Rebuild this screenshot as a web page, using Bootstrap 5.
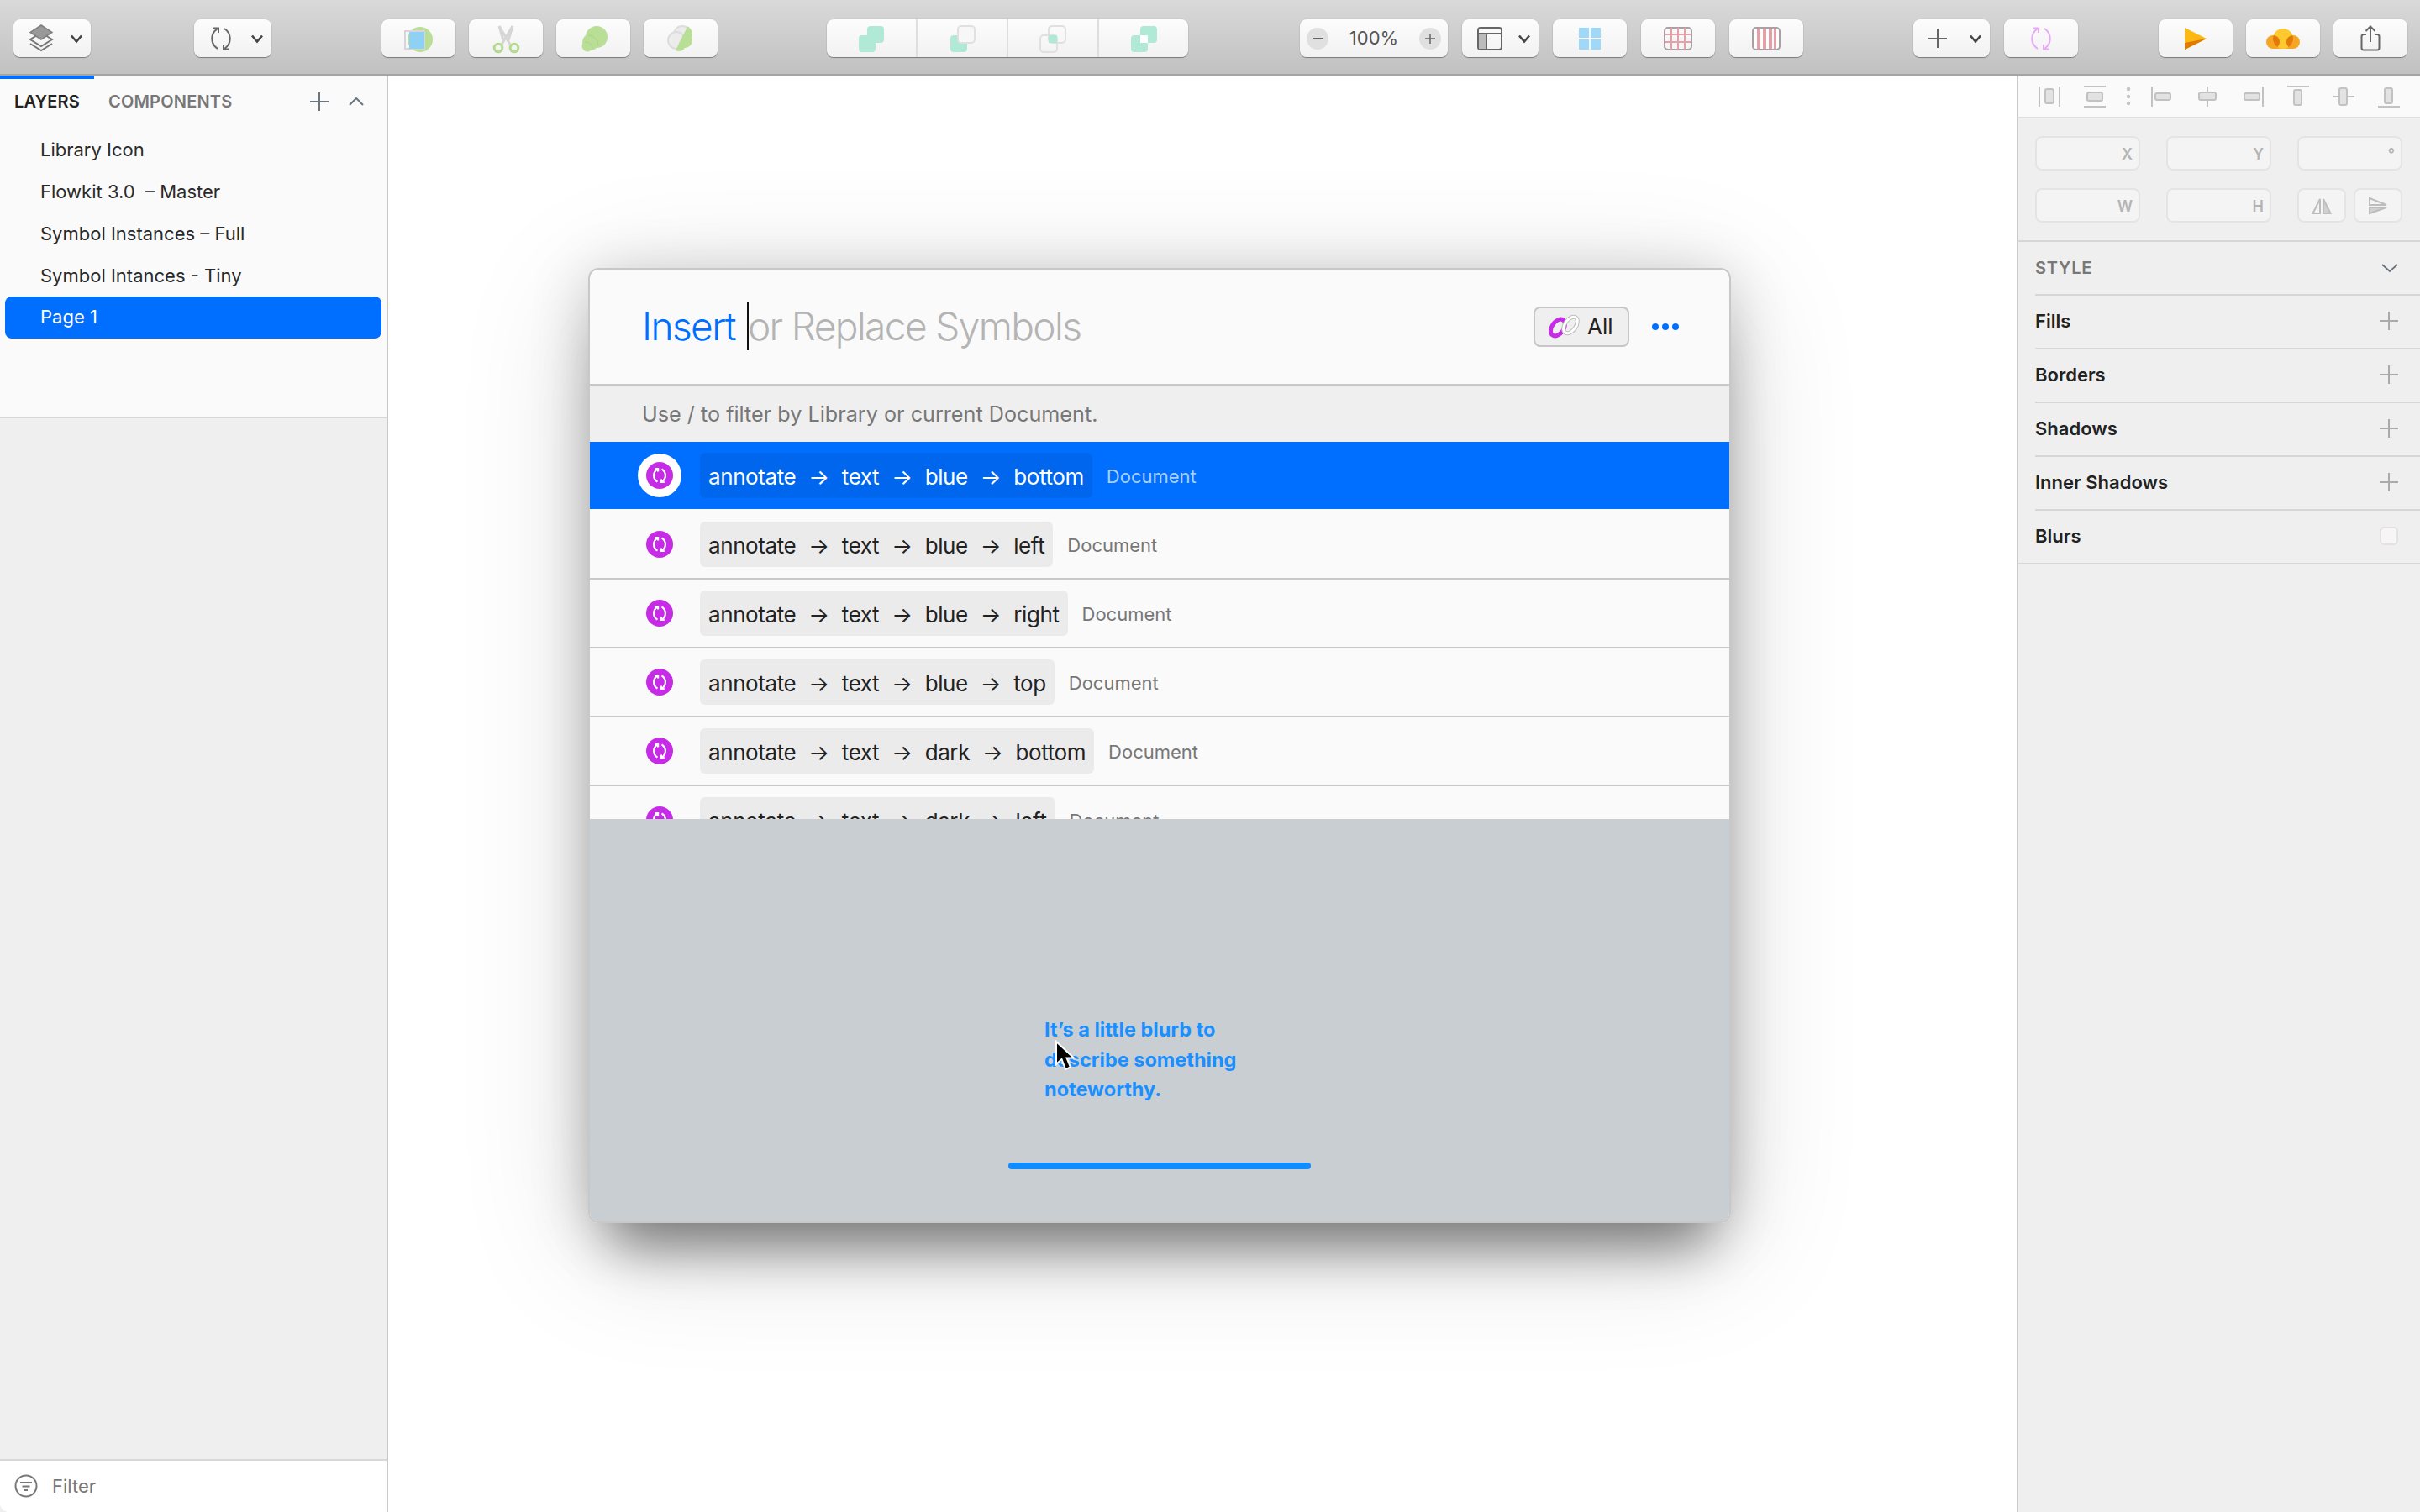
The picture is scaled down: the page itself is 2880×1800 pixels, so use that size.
<!DOCTYPE html>
<html lang="en">
<head>
  <meta charset="UTF-8" />
  <meta name="viewport" content="width=device-width, initial-scale=1.0"/>
  <title>Insert or Replace Symbols</title>
  <link href="https://cdn.jsdelivr.net/npm/bootstrap@5.3.0/dist/css/bootstrap.min.css" rel="stylesheet"/>
  <style>
    html, body {
      height: 1800px;
      overflow: hidden;
    }
    body {
      background: #fff;
      font-family: 'Inter', 'Liberation Sans', sans-serif;
      color: #222;
    }
    /* toolbar */
    .top-bar {
      height: 90px;
      padding: 23px 0 0 16px;
      background: linear-gradient(#d9d9d9, #c1c1c1);
      border-bottom: 2px solid #a4a4a4;
    }
    .tb-btn {
      height: 45px;
      border-radius: 8px;
      background: linear-gradient(#fcfcfc, #f2f2f2);
      box-shadow: 0 1px 1px rgba(0,0,0,.38), 0 0 1px rgba(0,0,0,.2);
      color: #666;
    }
    .tb-split { padding: 0 9px 0 18px; justify-content: space-between; }
    .w-92 { width: 92px; }
    .w-88 { width: 88px; }
    .w-91 { width: 91px; }
    .seg-btn { width: 430px; }
    .seg-btn > div { flex: 1 1 0; height: 100%; border-left: 2px solid #dedede; }
    .seg-btn > div:first-child { border-left: 0; }
    .zoom-btn { width: 176px; padding: 0 8px; font-size: 22px; font-weight: 400; color: #555; }
    .zoom-dot { width: 26px; height: 26px; border-radius: 50%; background: #e0e0e0; }
    .tb-gap-16 { gap: 16px; }
    .tb-gap-17 { gap: 17px; }
    .m-g2 { margin-left: 123px; }
    .m-g3 { margin-left: 131px; }
    .m-g4 { margin-left: 130px; }
    .m-g5 { margin-left: 133px; }
    .m-g6 { margin-left: 131px; }
    .m-g7 { margin-left: 96px; }
    .chev { color: #444; }
    .pink-sync { color: #e7a8f6; }

    .main-wrap { height: 1710px; }

    /* left pane */
    .left-pane {
      width: 462px;
      background: #efefef;
      border-right: 2px solid #c9c9c9;
    }
    .left-top {
      height: 408px;
      background: #fafafa;
      border-bottom: 2px solid #d6d6d6;
    }
    .tab-line { width: 112px; height: 4px; background: #006fff; }
    .tab-head { height: 54px; padding: 0 27px 0 17px; font-size: 20px; font-weight: 600; letter-spacing: .2px; }
    .tab-off { margin-left: 34px; color: #777; }
    .pg-list {
      --bs-list-group-bg: transparent;
      --bs-list-group-active-bg: #006fff;
      --bs-list-group-active-color: #fff;
      --bs-list-group-color: #2a2a2a;
      margin: 6px 6px 0;
    }
    .pg-row {
      height: 50px;
      padding: 0 0 2px 42px;
      border: 0;
      display: flex;
      align-items: center;
      font-size: 22px;
      border-radius: 8px !important;
    }
    .filter-bar {
      height: 63px;
      padding: 0 0 1px 17px;
      background: #fff;
      border-top: 2px solid #d8d8d8;
      border-bottom-left-radius: 10px;
      color: #777;
      font-size: 22px;
      gap: 17px;
    }

    /* canvas and dialog */
    .canvas { padding: 229px 0 0 238px; }
    .sym-dialog {
      width: 1360px;
      height: 1137px;
      border: 2px solid #c8c8c8;
      border-radius: 12px;
      background: #fafafa;
      overflow: hidden;
    }
    .dialog-shadow {
      box-shadow: 0 60px 60px -30px rgba(0,0,0,.38), 0 10px 70px rgba(0,0,0,.20), 0 30px 160px rgba(0,0,0,.14);
      border-radius: 12px;
      width: 1360px;
    }
    .dlg-head {
      height: 138px;
      padding: 0 60px 0 62px;
      border-bottom: 2px solid #c8c8c8;
      font-size: 46px;
      font-weight: 300;
      letter-spacing: -1.6px;
    }
    .ins-word { color: #006fff; }
    .ins-rest { color: #b4b4b4; }
    .caret-bar { width: 2px; height: 57px; background: #111; margin: 0 -1px 0 14px; }
    .all-btn {
      width: 114px;
      height: 48px;
      padding-left: 13px;
      border: 2px solid #c6c6c6;
      border-radius: 8px;
      background: #efefef;
      font-size: 26px;
      font-weight: 400;
      letter-spacing: 0;
      color: #222;
      gap: 7px;
    }
    .more-dots { margin-left: 27px; }
    .dlg-hint {
      height: 67px;
      padding: 4px 0 0 62px;
      background: #efefef;
      font-size: 25.2px;
      font-weight: 400;
      color: #777;
    }
    .sym-clip { height: 450px; overflow: hidden; }
    .sym-list {
      --bs-list-group-bg: #fafafa;
      --bs-list-group-active-bg: #006fff;
      --bs-list-group-active-color: #fff;
      --bs-list-group-border-width: 0;
      --bs-list-group-color: #222;
    }
    .sym-row {
      height: 82px;
      padding: 0 0 0 83px;
      border: 0;
      border-bottom: 2px solid #c8c8c8;
      border-radius: 0 !important;
      display: flex;
      align-items: center;
    }
    .sym-row.active { margin-top: 0; border-bottom: 2px solid #fafafa; }
    .sym-dot {
      width: 32px;
      height: 32px;
      margin-left: -16px;
      border-radius: 50%;
      background: #c62be6;
      color: #fff;
      flex-shrink: 0;
      position: relative;
    }
    .sym-row.active .sym-dot { box-shadow: 0 0 0 10px #fff; }
    .sym-pill {
      height: 54px;
      margin-left: 32px;
      padding: 3px 10px 0;
      border-radius: 6px;
      background: #ebebeb;
      font-size: 26px;
      font-weight: 400;
      letter-spacing: -.4px;
      gap: 15px;
    }
    .sym-row.active .sym-pill { background: #0066ee; }
    .sym-doc { margin: 4px 0 0 17px; font-size: 22px; color: #777; }
    .sym-row.active .sym-doc { color: #abcfff; }
    .dlg-foot { height: 479px; background: #c9ced3; }
    .blurb {
      width: 260px;
      margin-left: 541px;
      padding-top: 233px;
      color: #1a8fff;
      font-size: 23.5px;
      font-weight: 700;
      line-height: 35.5px;
    }
    .foot-bar { width: 360px; height: 8px; margin: 69px auto 0; border-radius: 4px; background: #0f8cff; }
    .cursor-mark { position: absolute; left: 553px; top: 263px; }

    /* right pane */
    .right-pane {
      width: 480px;
      background: #efefef;
      border-left: 2px solid #c9c9c9;
    }
    .align-row {
      height: 51px;
      padding-left: 20px;
      gap: 20px;
      background: #fafafa;
      border-bottom: 2px solid #dedede;
      color: #c2c2c2;
    }
    .geo-box {
      height: 147px;
      padding: 21px 0 0 20px;
      border-bottom: 2px solid #d6d6d6;
      gap: 21px;
    }
    .geo-line { gap: 31px; }
    .geo-input {
      width: 125px;
      height: 41px;
      padding: 2px 7px 0 0;
      border: 2px solid #e4e4e4;
      border-radius: 8px;
      background: #f4f4f4;
      color: #b4b4b4;
      font-size: 18px;
      font-weight: 600;
    }
    .geo-flip { width: 58px; padding: 0; }
    .geo-pair { width: 125px; gap: 9px; }
    .style-row {
      height: 64px;
      margin-left: 20px;
      padding: 0 26px 2px 0;
      border-bottom: 2px solid #d6d6d6;
      font-size: 22px;
      font-weight: 600;
      color: #222;
    }
    .style-head { padding-bottom: 0; font-size: 20px; color: #777; letter-spacing: .8px; }
    .style-end { margin-left: 0; padding-left: 20px; }
    .plus-mark { color: #aaa; }
    .blur-box { width: 22px; height: 22px; border-radius: 5px; border: 2px solid #e4e0e4; background: #f6f6f6; }
  </style>
</head>
<body>

<svg class="d-none" xmlns="http://www.w3.org/2000/svg">
  <symbol id="i-sync" viewBox="0 0 28 28">
    <path d="M10 26C1 20 1 8 10 2M5 1.500H11V7M18 2C27 8 27 20 18 26M23 26.500H17V21" fill="none" stroke="currentColor" stroke-width="2"/>
  </symbol>
  <symbol id="i-sync-sm" viewBox="0 0 28 28">
    <path d="M10 26C1 20 1 8 10 2M5 1.500H11V7M18 2C27 8 27 20 18 26M23 26.500H17V21" fill="none" stroke="currentColor" stroke-width="3.400"/>
  </symbol>
  <symbol id="i-chev" viewBox="0 0 16 12">
    <path d="M2 2.500L8 9.500L14 2.500" fill="none" stroke="currentColor" stroke-width="2.600"/>
  </symbol>
  <symbol id="i-plus" viewBox="0 0 22 22">
    <path d="M11 0V22M0 11H22" fill="none" stroke="currentColor" stroke-width="2"/>
  </symbol>
</svg>

<div class="top-bar d-flex align-items-start">
  <div class="tb-btn tb-split w-92 d-flex align-items-center">
    <svg width="30" height="34" viewBox="0 0 30 34"><path d="M15 10L28 18 15 26 2 18Z" fill="none" stroke="#777" stroke-width="2"/><path d="M2 23L15 31 28 23" fill="none" stroke="#777" stroke-width="2"/><path d="M15 1L28 9.500 15 18 2 9.500Z" fill="#999" stroke="#808080" stroke-width="1.500"/></svg>
    <svg class="chev" width="16" height="12"><use href="#i-chev"/></svg>
  </div>
  <div class="tb-btn tb-split w-92 m-g2 d-flex align-items-center">
    <svg width="28" height="28"><use href="#i-sync"/></svg>
    <svg class="chev" width="16" height="12"><use href="#i-chev"/></svg>
  </div>
  <div class="m-g3 d-flex tb-gap-16">
    <div class="tb-btn w-88 d-flex align-items-center justify-content-center">
      <svg width="40" height="40" viewBox="0 0 40 40"><circle cx="22" cy="21" r="15" fill="#b9de95"/><rect x="4" y="11" width="23" height="21" fill="none" stroke="#d8d4dc" stroke-width="2"/><rect x="9" y="12" width="18" height="20" fill="#8fd0f5"/></svg>
    </div>
    <div class="tb-btn w-88 d-flex align-items-center justify-content-center">
      <svg width="40" height="40" viewBox="0 0 40 40"><path d="M12 5L25 27M28 5L15 27M12 5L17 22M28 5L23 22" fill="none" stroke="#d6d6d6" stroke-width="3"/><circle cx="11" cy="31" r="4.800" fill="none" stroke="#b4da8e" stroke-width="3"/><circle cx="30" cy="31" r="4.800" fill="none" stroke="#b4da8e" stroke-width="3"/></svg>
    </div>
    <div class="tb-btn w-88 d-flex align-items-center justify-content-center">
      <svg width="40" height="40" viewBox="0 0 40 40"><circle cx="24" cy="18" r="13" fill="#b9de95"/><circle cx="17" cy="24" r="10" fill="#b9de95"/><circle cx="13" cy="29" r="6.500" fill="#b9de95"/><path d="M14 16A12 12 0 0 1 26 28M10 24A8 8 0 0 1 19 32" fill="none" stroke="#abd388" stroke-width="1"/></svg>
    </div>
    <div class="tb-btn w-88 d-flex align-items-center justify-content-center">
      <svg width="40" height="40" viewBox="0 0 40 40"><defs><clipPath id="half-cut"><path d="M29 4H40V40H11Z"/></clipPath></defs><circle cx="22" cy="15" r="10" fill="#ececec" stroke="#ddd" stroke-width="2"/><circle cx="15" cy="22" r="10" fill="#ececec" stroke="#ddd" stroke-width="2"/><g clip-path="url(#half-cut)"><circle cx="23" cy="15" r="11" fill="#b9de95"/><circle cx="25" cy="22" r="9" fill="#b9de95"/><circle cx="18" cy="27" r="8" fill="#b9de95"/></g></svg>
    </div>
  </div>
  <div class="tb-btn seg-btn m-g4 d-flex">
    <div class="d-flex align-items-center justify-content-center">
      <svg width="40" height="40" viewBox="0 0 40 40"><rect x="15" y="5" width="20" height="20" rx="4" fill="#b0e9d6"/><rect x="5" y="16" width="20" height="20" rx="4" fill="#b0e9d6"/></svg>
    </div>
    <div class="d-flex align-items-center justify-content-center">
      <svg width="40" height="40" viewBox="0 0 40 40"><rect x="6" y="16" width="20" height="20" rx="4" fill="#b0e9d6"/><rect x="15" y="5" width="20" height="20" rx="4" fill="#f7f7f7" stroke="#e0e0e0" stroke-width="2"/></svg>
    </div>
    <div class="d-flex align-items-center justify-content-center">
      <svg width="40" height="40" viewBox="0 0 40 40"><rect x="5" y="16" width="20" height="20" rx="4" fill="none" stroke="#e0e0e0" stroke-width="2"/><rect x="15" y="5" width="20" height="20" rx="4" fill="none" stroke="#e0e0e0" stroke-width="2"/><rect x="15" y="16" width="10" height="9" fill="#b0e9d6"/></svg>
    </div>
    <div class="d-flex align-items-center justify-content-center">
      <svg width="40" height="40" viewBox="0 0 40 40"><rect x="16" y="5" width="20" height="20" rx="4" fill="#b0e9d6"/><rect x="5" y="16" width="20" height="20" rx="4" fill="#b0e9d6"/><rect x="16" y="16" width="9" height="9" fill="#fff"/></svg>
    </div>
  </div>
  <div class="m-g5 d-flex tb-gap-17">
    <div class="tb-btn zoom-btn d-flex align-items-center justify-content-between">
      <div class="zoom-dot d-flex align-items-center justify-content-center"><svg width="14" height="14"><path d="M1 7H13" stroke="#666" stroke-width="2"/></svg></div>
      <span>100%</span>
      <div class="zoom-dot d-flex align-items-center justify-content-center"><svg width="14" height="14"><path d="M1 7H13M7 1V13" stroke="#666" stroke-width="1.500"/></svg></div>
    </div>
    <div class="tb-btn tb-split w-91 d-flex align-items-center">
      <svg width="30" height="28" viewBox="0 0 30 28"><rect x="1" y="1" width="28" height="26" rx="3" fill="none" stroke="#666" stroke-width="2"/><rect x="2" y="8" width="9" height="18" fill="#bbb"/><path d="M1 8H29M11 8V27" stroke="#666" stroke-width="2"/></svg>
      <svg class="chev" width="16" height="12"><use href="#i-chev"/></svg>
    </div>
    <div class="tb-btn w-88 d-flex align-items-center justify-content-center">
      <svg width="26" height="26" viewBox="0 0 26 26"><rect width="12" height="12" fill="#a0d8f8"/><rect x="14" width="12" height="12" fill="#a0d8f8"/><rect y="14" width="12" height="12" fill="#a0d8f8"/><rect x="14" y="14" width="12" height="12" fill="#a0d8f8"/></svg>
    </div>
    <div class="tb-btn w-88 d-flex align-items-center justify-content-center">
      <svg width="34" height="28" viewBox="0 0 34 28"><rect x="1" y="1" width="32" height="26" rx="4" fill="none" stroke="#a8a0a4" stroke-width="2"/><path d="M1 9H33M1 18H33M9 1V27M17 1V27M25 1V27" stroke="#e59fa7" stroke-width="2"/></svg>
    </div>
    <div class="tb-btn w-88 d-flex align-items-center justify-content-center">
      <svg width="34" height="28" viewBox="0 0 34 28"><rect x="1" y="1" width="32" height="26" rx="4" fill="#fff" stroke="#a8a0a4" stroke-width="2"/><path d="M6 2H10V26H6ZM13 2H17V26H13ZM20 2H24V26H20ZM26 2H29V26H26Z" fill="#e59fa7"/></svg>
    </div>
  </div>
  <div class="m-g6 d-flex tb-gap-17">
    <div class="tb-btn tb-split w-91 d-flex align-items-center">
      <svg width="22" height="22"><use href="#i-plus"/></svg>
      <svg class="chev" width="16" height="12"><use href="#i-chev"/></svg>
    </div>
    <div class="tb-btn w-88 d-flex align-items-center justify-content-center">
      <svg class="pink-sync" width="28" height="28"><use href="#i-sync"/></svg>
    </div>
  </div>
  <div class="m-g7 d-flex tb-gap-16">
    <div class="tb-btn w-88 d-flex align-items-center justify-content-center">
      <svg width="28" height="28" viewBox="0 0 28 28"><path d="M1 1L27 14 1 27Z" fill="#fdb913"/><path d="M1 27L27 14 6 18 1 19Z" fill="#e07a00"/></svg>
    </div>
    <div class="tb-btn w-88 d-flex align-items-center justify-content-center">
      <svg width="40" height="26" viewBox="0 0 40 26"><defs><clipPath id="cloud-mid"><circle cx="20" cy="13" r="12"/></clipPath></defs><circle cx="8" cy="17" r="8" fill="#f6a623"/><circle cx="32" cy="17" r="8" fill="#f6a623"/><rect x="8" y="19" width="24" height="6" fill="#f6a623"/><circle cx="20" cy="13" r="12" fill="#fdc92e"/><g clip-path="url(#cloud-mid)"><circle cx="8" cy="17" r="8" fill="#e2790a"/><circle cx="32" cy="17" r="8" fill="#e2790a"/></g></svg>
    </div>
    <div class="tb-btn w-88 d-flex align-items-center justify-content-center">
      <svg width="24" height="31" viewBox="0 0 24 31"><path d="M7 11H4A2.500 2.500 0 0 0 1.500 13.500V27A2.500 2.500 0 0 0 4 29.500H20A2.500 2.500 0 0 0 22.500 27V13.500A2.500 2.500 0 0 0 20 11H17M12 20V2M6.500 7L12 1.500 17.500 7" fill="none" stroke="#666" stroke-width="2"/></svg>
    </div>
  </div>
</div>

<div class="d-flex main-wrap">
  <aside class="left-pane d-flex flex-column flex-shrink-0">
    <div class="left-top">
      <div class="tab-line"></div>
      <div class="tab-head d-flex align-items-center">
        <span>LAYERS</span>
        <span class="tab-off">COMPONENTS</span>
        <svg class="ms-auto text-secondary" width="22" height="22"><use href="#i-plus"/></svg>
        <svg class="text-secondary ms-4" width="18" height="12" viewBox="0 0 18 12"><path d="M1 10L9 2 17 10" fill="none" stroke="currentColor" stroke-width="2"/></svg>
      </div>
      <div class="list-group pg-list">
        <div class="list-group-item pg-row">Library Icon</div>
        <div class="list-group-item pg-row">Flowkit 3.0 &nbsp;– Master</div>
        <div class="list-group-item pg-row">Symbol Instances – Full</div>
        <div class="list-group-item pg-row">Symbol Intances - Tiny</div>
        <div class="list-group-item pg-row active">Page 1</div>
      </div>
    </div>
    <div class="flex-grow-1"></div>
    <div class="filter-bar d-flex align-items-center">
      <svg width="28" height="28" viewBox="0 0 28 28"><circle cx="14" cy="14" r="12.500" fill="none" stroke="#777" stroke-width="2"/><path d="M7 10H21M9.500 14.500H18.500M12 19H16" stroke="#777" stroke-width="2"/></svg>
      <span>Filter</span>
    </div>
  </aside>

  <main class="canvas flex-grow-1">
    <div class="dialog-shadow">
      <div class="sym-dialog d-flex flex-column">
        <div class="dlg-head d-flex align-items-center">
          <span class="ins-word">Insert</span>
          <span class="caret-bar"></span>
          <span class="ins-rest">or Replace Symbols</span>
          <div class="all-btn d-flex align-items-center ms-auto">
            <svg width="42" height="34" viewBox="0 0 42 34"><ellipse cx="14" cy="18" rx="7" ry="11" transform="rotate(35 14 18)" fill="none" stroke="#c62be6" stroke-width="5"/><ellipse cx="29" cy="15" rx="6.500" ry="11" transform="rotate(35 29 15)" fill="none" stroke="#bdbdbd" stroke-width="5"/><ellipse cx="29" cy="15" rx="6.500" ry="11" transform="rotate(35 29 15)" fill="none" stroke="#fff" stroke-width="3"/></svg>
            <span>All</span>
          </div>
          <svg class="more-dots" width="32" height="8" viewBox="0 0 32 8"><circle cx="4" cy="4" r="4" fill="#006fff"/><circle cx="16" cy="4" r="4" fill="#006fff"/><circle cx="28" cy="4" r="4" fill="#006fff"/></svg>
        </div>
        <div class="dlg-hint d-flex align-items-center">Use / to filter by Library or current Document.</div>
        <div class="sym-clip">
          <div class="list-group sym-list">
            <div class="list-group-item sym-row active">
              <div class="sym-dot d-flex align-items-center justify-content-center"><svg width="18" height="18"><use href="#i-sync-sm"/></svg></div>
              <div class="sym-pill d-flex align-items-center"><span>annotate</span><span>→</span><span>text</span><span>→</span><span>blue</span><span>→</span><span>bottom</span></div>
              <span class="sym-doc">Document</span>
            </div>
            <div class="list-group-item sym-row">
              <div class="sym-dot d-flex align-items-center justify-content-center"><svg width="18" height="18"><use href="#i-sync-sm"/></svg></div>
              <div class="sym-pill d-flex align-items-center"><span>annotate</span><span>→</span><span>text</span><span>→</span><span>blue</span><span>→</span><span>left</span></div>
              <span class="sym-doc">Document</span>
            </div>
            <div class="list-group-item sym-row">
              <div class="sym-dot d-flex align-items-center justify-content-center"><svg width="18" height="18"><use href="#i-sync-sm"/></svg></div>
              <div class="sym-pill d-flex align-items-center"><span>annotate</span><span>→</span><span>text</span><span>→</span><span>blue</span><span>→</span><span>right</span></div>
              <span class="sym-doc">Document</span>
            </div>
            <div class="list-group-item sym-row">
              <div class="sym-dot d-flex align-items-center justify-content-center"><svg width="18" height="18"><use href="#i-sync-sm"/></svg></div>
              <div class="sym-pill d-flex align-items-center"><span>annotate</span><span>→</span><span>text</span><span>→</span><span>blue</span><span>→</span><span>top</span></div>
              <span class="sym-doc">Document</span>
            </div>
            <div class="list-group-item sym-row">
              <div class="sym-dot d-flex align-items-center justify-content-center"><svg width="18" height="18"><use href="#i-sync-sm"/></svg></div>
              <div class="sym-pill d-flex align-items-center"><span>annotate</span><span>→</span><span>text</span><span>→</span><span>dark</span><span>→</span><span>bottom</span></div>
              <span class="sym-doc">Document</span>
            </div>
            <div class="list-group-item sym-row">
              <div class="sym-dot d-flex align-items-center justify-content-center"><svg width="18" height="18"><use href="#i-sync-sm"/></svg></div>
              <div class="sym-pill d-flex align-items-center"><span>annotate</span><span>→</span><span>text</span><span>→</span><span>dark</span><span>→</span><span>left</span></div>
              <span class="sym-doc">Document</span>
            </div>
          </div>
        </div>
        <div class="dlg-foot position-relative">
          <div class="blurb">It’s a little blurb to describe something noteworthy.</div>
          <div class="foot-bar"></div>
          <svg class="cursor-mark" width="24" height="38" viewBox="0 0 24 38"><path d="M2 2V29L8.500 23 13 35 19 32.500 14.500 21.500H23Z" fill="#000" stroke="#fff" stroke-width="2"/></svg>
        </div>
      </div>
    </div>
  </main>

  <aside class="right-pane flex-shrink-0">
    <div class="align-row d-flex align-items-center">
      <svg width="34" height="30" viewBox="0 0 34 30"><path d="M5 3V27M29 3V27" stroke="currentColor" stroke-width="2"/><rect x="12" y="6" width="10" height="17" rx="2" fill="#e2e2e2" stroke="currentColor" stroke-width="2"/></svg>
      <svg width="34" height="30" viewBox="0 0 34 30"><path d="M4 3H30M4 27H30" stroke="currentColor" stroke-width="2"/><rect x="8" y="10" width="18" height="10" rx="2" fill="#e2e2e2" stroke="currentColor" stroke-width="2"/></svg>
      <svg width="6" height="30" viewBox="0 0 6 30"><circle cx="3" cy="6" r="2.200" fill="currentColor"/><circle cx="3" cy="15" r="2.200" fill="currentColor"/><circle cx="3" cy="23" r="2.200" fill="currentColor"/></svg>
      <svg width="34" height="30" viewBox="0 0 34 30"><path d="M5 3V27" stroke="currentColor" stroke-width="2"/><rect x="9" y="11" width="18" height="8" rx="2" fill="#e2e2e2" stroke="currentColor" stroke-width="2"/></svg>
      <svg width="34" height="30" viewBox="0 0 34 30"><path d="M17 3V27" stroke="currentColor" stroke-width="2"/><rect x="7" y="10" width="20" height="9" rx="2" fill="#e2e2e2" stroke="currentColor" stroke-width="2"/></svg>
      <svg width="34" height="30" viewBox="0 0 34 30"><path d="M29 3V27" stroke="currentColor" stroke-width="2"/><rect x="7" y="11" width="18" height="8" rx="2" fill="#e2e2e2" stroke="currentColor" stroke-width="2"/></svg>
      <svg width="34" height="30" viewBox="0 0 34 30"><path d="M4 3H30" stroke="currentColor" stroke-width="2"/><rect x="12" y="7" width="9" height="18" rx="2" fill="#e2e2e2" stroke="currentColor" stroke-width="2"/></svg>
      <svg width="34" height="30" viewBox="0 0 34 30"><path d="M4 15H30" stroke="currentColor" stroke-width="2"/><rect x="12" y="5" width="9" height="20" rx="2" fill="#e2e2e2" stroke="currentColor" stroke-width="2"/></svg>
      <svg width="34" height="30" viewBox="0 0 34 30"><path d="M4 27H30" stroke="currentColor" stroke-width="2"/><rect x="12" y="5" width="9" height="18" rx="2" fill="#e2e2e2" stroke="currentColor" stroke-width="2"/></svg>
    </div>
    <div class="geo-box d-flex flex-column">
      <div class="geo-line d-flex">
        <div class="geo-input d-flex align-items-center justify-content-end">X</div>
        <div class="geo-input d-flex align-items-center justify-content-end">Y</div>
        <div class="geo-input d-flex align-items-center justify-content-end">°</div>
      </div>
      <div class="geo-line d-flex">
        <div class="geo-input d-flex align-items-center justify-content-end">W</div>
        <div class="geo-input d-flex align-items-center justify-content-end">H</div>
        <div class="geo-pair d-flex">
          <div class="geo-input geo-flip d-flex align-items-center justify-content-center">
            <svg width="24" height="22" viewBox="0 0 24 22"><path d="M10 3V20H1.500Z" fill="none" stroke="#bdbdbd" stroke-width="2"/><path d="M14 3V20H22.500Z" fill="#d0d0d0" stroke="#bdbdbd" stroke-width="2"/></svg>
          </div>
          <div class="geo-input geo-flip d-flex align-items-center justify-content-center">
            <svg width="24" height="22" viewBox="0 0 24 22"><path d="M2 2L22 10H2Z" fill="none" stroke="#bdbdbd" stroke-width="2"/><path d="M2 13H22L2 20Z" fill="#d0d0d0" stroke="#bdbdbd" stroke-width="2"/></svg>
          </div>
        </div>
      </div>
    </div>
    <div class="style-row style-head d-flex align-items-center justify-content-between">
      <span>STYLE</span>
      <svg class="text-secondary" width="20" height="12" viewBox="0 0 20 12"><path d="M1 2L10 10 19 2" fill="none" stroke="currentColor" stroke-width="1.800"/></svg>
    </div>
    <div class="style-row d-flex align-items-center justify-content-between"><span>Fills</span><svg class="plus-mark" width="22" height="22"><use href="#i-plus"/></svg></div>
    <div class="style-row d-flex align-items-center justify-content-between"><span>Borders</span><svg class="plus-mark" width="22" height="22"><use href="#i-plus"/></svg></div>
    <div class="style-row d-flex align-items-center justify-content-between"><span>Shadows</span><svg class="plus-mark" width="22" height="22"><use href="#i-plus"/></svg></div>
    <div class="style-row d-flex align-items-center justify-content-between"><span>Inner Shadows</span><svg class="plus-mark" width="22" height="22"><use href="#i-plus"/></svg></div>
    <div class="style-row style-end d-flex align-items-center justify-content-between ms-0"><span>Blurs</span><span class="blur-box"></span></div>
  </aside>
</div>

</body>
</html>
